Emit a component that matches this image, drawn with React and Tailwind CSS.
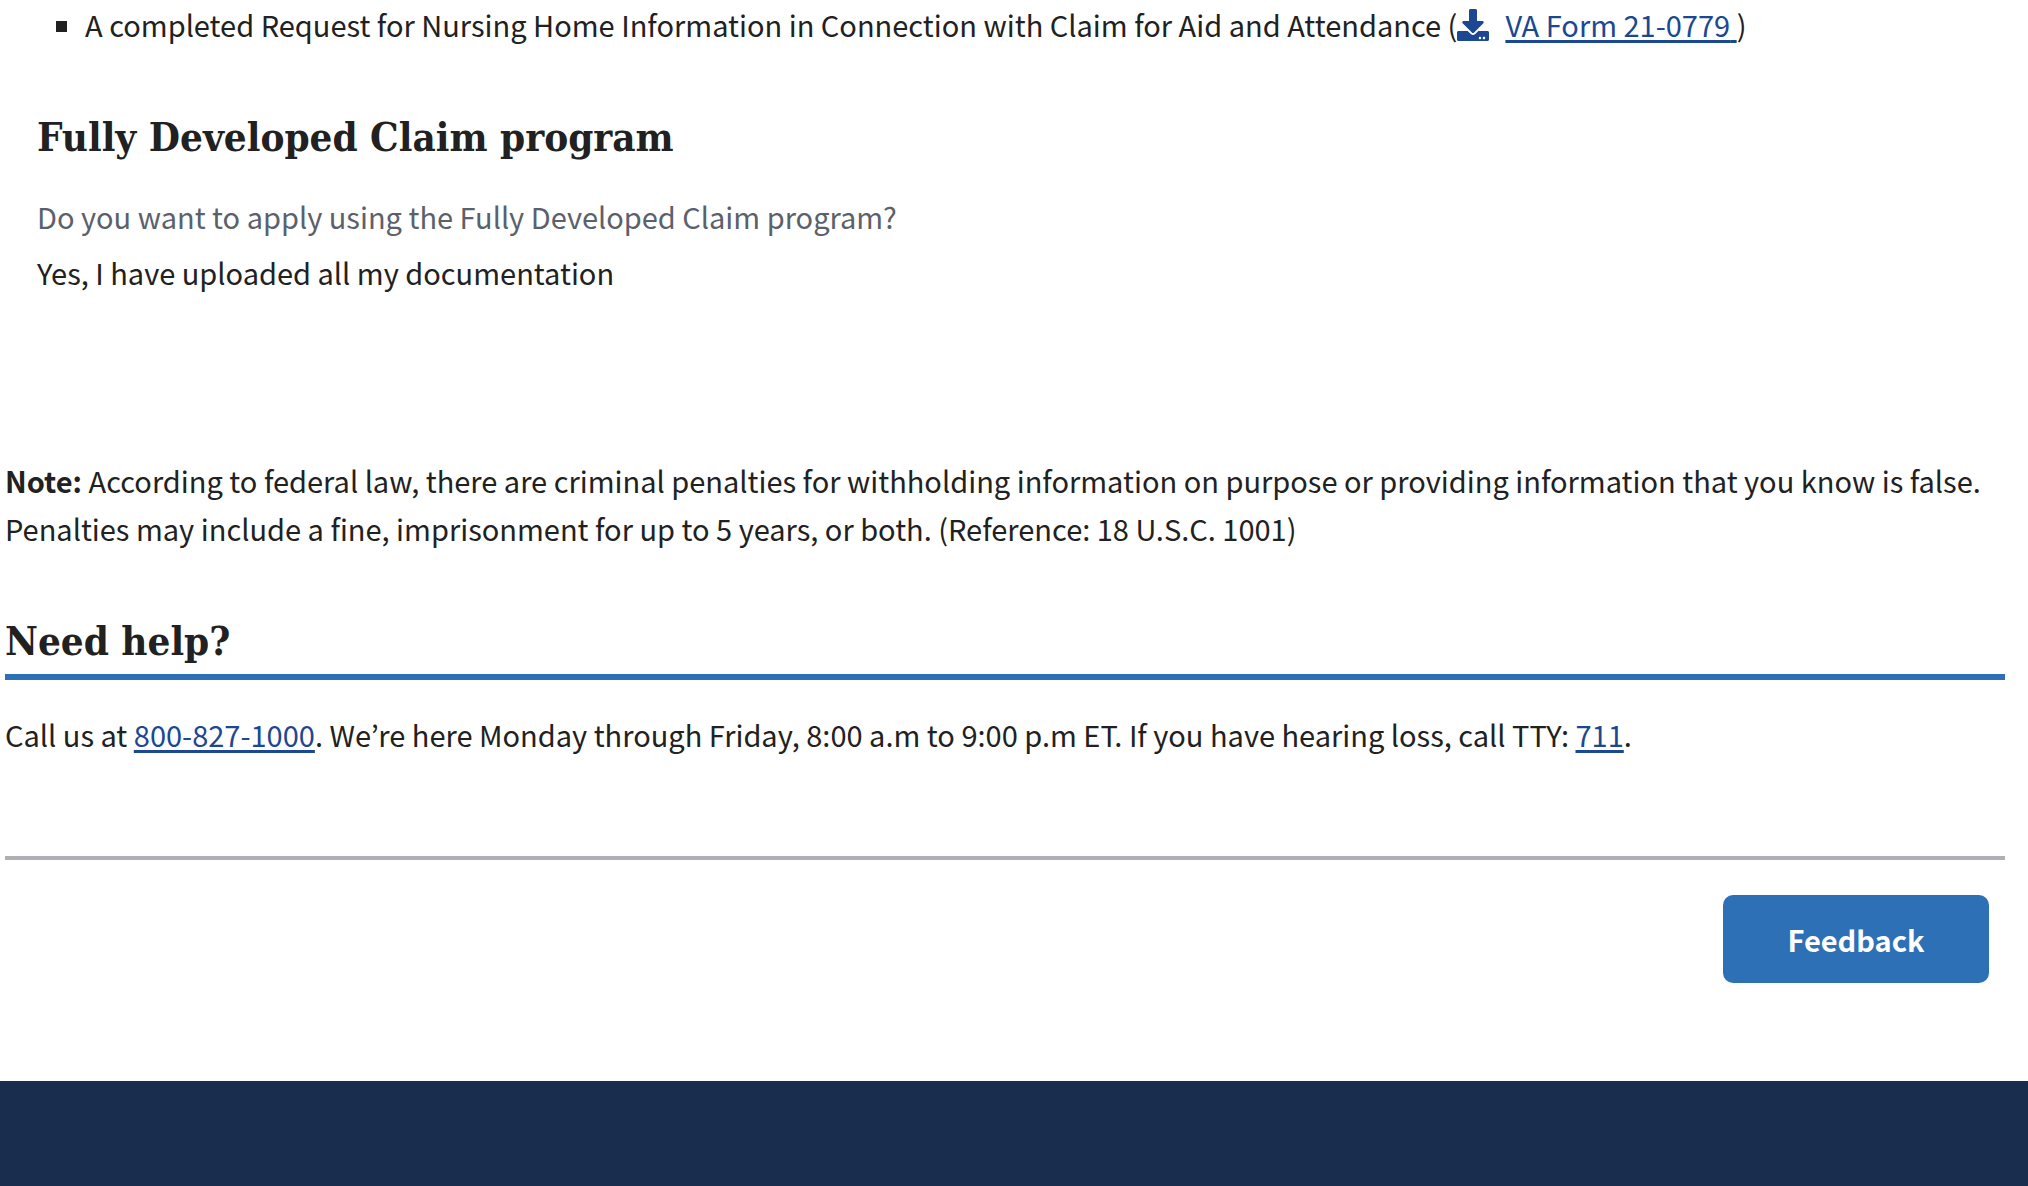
import { FaDownload } from "react-icons/fa";

const heading =
  "font-['DejaVu_Serif_Condensed','DejaVu_Serif',serif] text-[40px] leading-[50px] font-bold";
const link = "text-[#1b4891] underline decoration-[3px] underline-offset-[3px]";

export default function App() {
  return (
    <div className="flex min-h-screen flex-col bg-white font-['Noto_Sans_CJK_JP','Noto_Sans',sans-serif] text-[29px] leading-[48px] text-[#212121]">
      <main className="pr-[23px] pl-[5px]">
        <section className="pl-8">
          <ul className="list-[square] pl-12">
            <li>
              A completed Request for Nursing Home Information in Connection with Claim for Aid and Attendance (
              <a href="#form-21-0779" className={link}>
                <FaDownload aria-hidden="true" className="mr-4 inline-block size-8 align-[-4px]" />
                VA Form 21-0779{" "}
              </a>
              )
            </li>
          </ul>
          <h3 className={`mt-16 ${heading}`}>Fully Developed Claim program</h3>
          <dl className="mt-[30px]">
            <dt className="text-[#5b616b]">Do you want to apply using the Fully Developed Claim program?</dt>
            <dd className="mt-2">Yes, I have uploaded all my documentation</dd>
          </dl>
        </section>
        <p className="mt-40">
          <strong>Note:</strong> According to federal law, there are criminal penalties for withholding
          information on purpose or providing information that you know is false. Penalties may include a
          fine, imprisonment for up to 5 years, or both. (Reference: 18 U.S.C. 1001)
        </p>
        <h2 className={`mt-16 border-b-[6px] border-[#2e70b6] pb-2 ${heading}`}>Need help?</h2>
        <p className="mt-[30px]">
          Call us at <a href="tel:8008271000" className={link}>800-827-1000</a>. We’re here Monday through
          Friday, 8:00 a.m to 9:00 p.m ET. If you have hearing loss, call TTY:{" "}
          <a href="tel:711" className={link}>711</a>.
        </p>
        <hr className="mt-[98px] border-t-4 border-[#aeb0b5]" />
        <div className="mt-[35px] mb-[98px] flex justify-end pr-4">
          <button type="button" className="h-[88px] w-[266px] rounded-[10px] bg-[#2e70b6] font-bold text-white">
            Feedback
          </button>
        </div>
      </main>
      <footer className="grow bg-[#192d4e]" />
    </div>
  );
}
